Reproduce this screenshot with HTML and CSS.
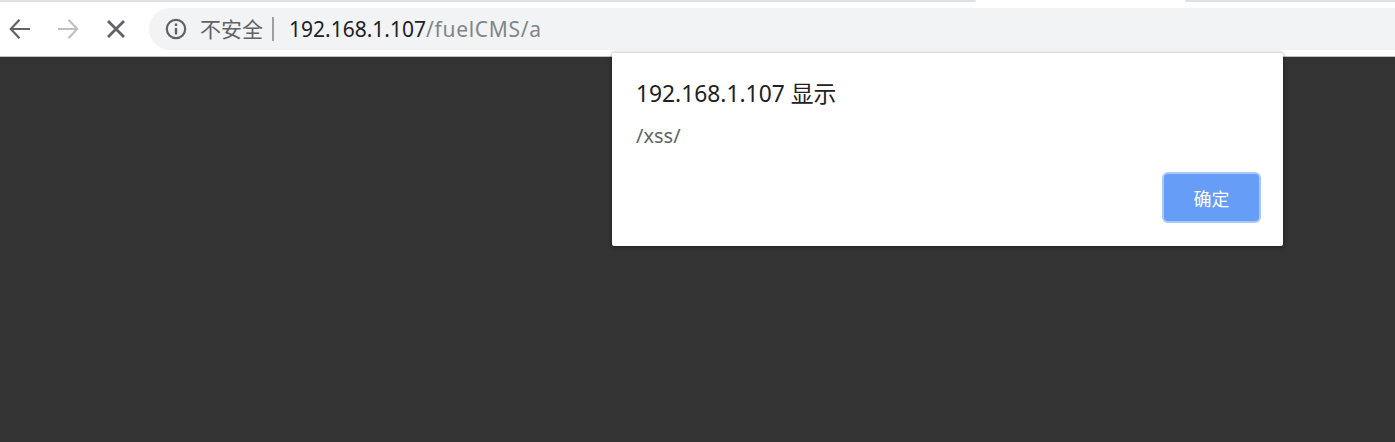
FILE: index.html
```html
<!DOCTYPE html>
<html lang="zh-CN">
<head>
<meta charset="utf-8">
<title>192.168.1.107/fuelCMS/a</title>
<link rel="stylesheet" href="styles.css">
</head>
<body>
<div class="chrome">
  <div class="tabstrip">
    <div class="tab-left"></div>
    <div class="tab-gap"></div>
    <div class="tab-right"></div>
  </div>
  <div class="toolbar">
    <svg class="nav nav-back" viewBox="0 0 24 24"><path d="M22 12H3.500M11.500 2.800L2.800 12l8.700 9.200" fill="none" stroke="#5f6368" stroke-width="2.200"/></svg>
    <svg class="nav nav-forward" viewBox="0 0 24 24"><path d="M2 12h18.500M12.500 2.800l8.700 9.200-8.700 9.200" fill="none" stroke="#bdc1c6" stroke-width="2.200"/></svg>
    <svg class="nav nav-stop" viewBox="0 0 24 24"><path d="M4 4l16 16M20 4L4 20" fill="none" stroke="#5f6368" stroke-width="2.800"/></svg>
    <div class="omnibox">
      <svg class="info" viewBox="0 0 22 22"><circle cx="11" cy="11" r="9.200" fill="none" stroke="#5f6368" stroke-width="2.200"/><path d="M11 10v6.500M11 5.500v2.500" fill="none" stroke="#5f6368" stroke-width="2.400"/></svg>
      <span class="insecure">不安全</span>
      <span class="divider"></span>
      <span class="url"><span class="host">192.168.1.107</span><span class="path">/fuelCMS/a</span></span>
    </div>
  </div>
</div>
<div class="content"></div>
<div class="dialog">
  <div class="dialog-title">192.168.1.107 显示</div>
  <div class="dialog-message">/xss/</div>
  <div class="dialog-actions"><button class="ok">确定</button></div>
</div>
</body>
</html>
```
FILE: styles.css
```css
* { box-sizing: border-box; }
html, body { margin: 0; height: 100%; overflow: hidden; }
body {
  display: flex;
  flex-direction: column;
  font-family: "Noto Sans", "Noto Sans CJK SC", sans-serif;
  background: #333;
}
.chrome { background: #fff; height: 57px; border-bottom: 1px solid #bfc1c4; flex: none; }
.tabstrip { display: flex; height: 2px; }
.tab-left { width: 976px; background: #dee1e6; border-bottom-right-radius: 6px; }
.tab-gap { width: 209px; background: #fff; }
.tab-right { flex: 1; background: #dee1e6; border-bottom-left-radius: 6px; }
.toolbar { display: flex; align-items: center; height: 42px; margin-top: 6px; padding-left: 8px; }
.nav { width: 24px; height: 24px; flex: none; }
.nav-forward { margin-left: 24px; }
.nav-stop { margin-left: 24px; }
.omnibox {
  flex: 1;
  height: 42px;
  margin-left: 21px;
  display: flex;
  align-items: center;
  background: #f1f3f4;
  border-radius: 21px 0 0 21px;
  padding-left: 16px;
}
.info { width: 22px; height: 22px; flex: none; }
.insecure { margin-left: 13px; margin-bottom: 2px; font-size: 21px; color: #5f6368; }
.divider { width: 2px; height: 24px; background: #9aa0a6; margin: 0 15px 0 9px; }
.url { font-size: 21px; }
.host { color: #202124; }
.path { color: #80868b; letter-spacing: .7px; }
.content { flex: 1; background: #333; }
.dialog {
  position: absolute;
  left: 612px;
  top: 52px;
  width: 671px;
  height: 194px;
  background: #fff;
  border-top: 1px solid #dcdcdc;
  border-radius: 2px;
  box-shadow: 0 1px 4px rgba(0, 0, 0, .4);
  padding: 26px 22px 23px 24px;
  display: flex;
  flex-direction: column;
}
.dialog-title { font-size: 22.800px; line-height: 30px; color: #202124; }
.dialog-message { font-size: 20px; line-height: 26px; margin-top: 14px; color: #5f6368; }
.dialog-actions { margin-top: auto; display: flex; justify-content: flex-end; }
.ok {
  width: 99px;
  height: 51px;
  background: #669df6;
  border: 2px solid #a9c8fa;
  border-radius: 6px;
  color: #fff;
  font: 18px "Noto Sans CJK SC", sans-serif;
  padding: 0;
}
```
